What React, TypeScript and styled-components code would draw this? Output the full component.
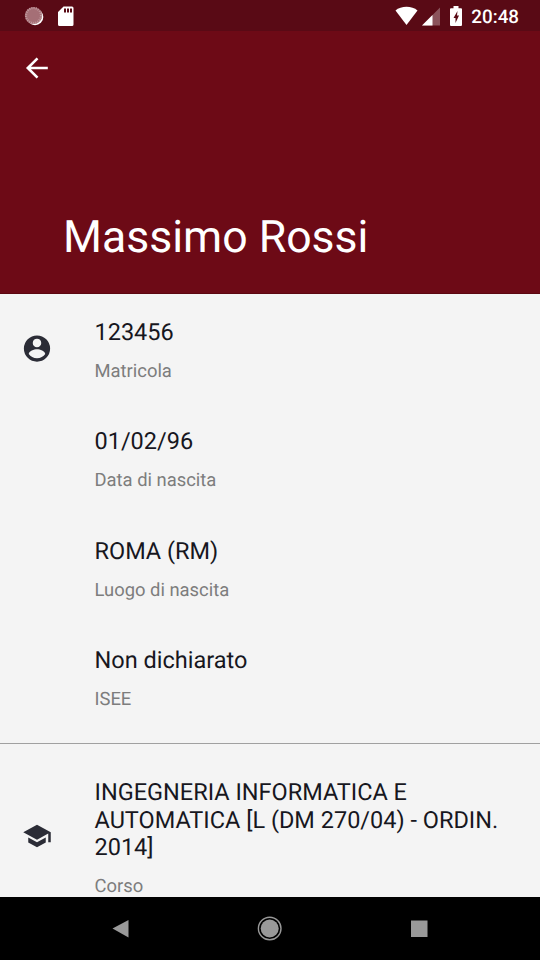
import React from "react";
import styled, { createGlobalStyle } from "styled-components";

const GlobalStyle = createGlobalStyle`
  * { box-sizing: border-box; }
  html, body { margin: 0; padding: 0; }
  body {
    font-family: Roboto, "Liberation Sans", sans-serif;
    text-rendering: geometricPrecision;
  }
  svg { display: block; }
`;

const Screen = styled.main`
  width: 540px;
  height: 960px;
  display: flex;
  flex-direction: column;
  overflow: hidden;
  background: #f4f4f4;
`;

const StatusBar = styled.div`
  flex: none;
  height: 31px;
  display: flex;
  align-items: center;
  justify-content: space-between;
  padding: 0 21px 0 24px;
  background: #590a15;
  color: #fff;
`;

const StatusGroup = styled.div<{ $gap: number }>`
  display: flex;
  align-items: center;
  gap: ${(p) => p.$gap}px;
`;

const Clock = styled.span`
  font-size: 18.800px;
  font-weight: 500;
  line-height: 22px;
  margin-top: 2px;
`;

const Header = styled.header`
  flex: none;
  height: 263px;
  display: flex;
  flex-direction: column;
  justify-content: space-between;
  padding: 19px 23px 29px;
  border-bottom: 1px solid #5c0710;
  background: #6d0a16;
  color: #fff;
`;

const BackButton = styled.button`
  width: 28px;
  height: 36px;
  padding: 0;
  border: 0;
  background: none;
  color: inherit;
  display: flex;
  align-items: center;
`;

const Title = styled.h1`
  margin: 0 0 0 40px;
  font-size: 44.600px;
  font-weight: 400;
  line-height: 54px;
  white-space: nowrap;
`;

const Content = styled.div`
  flex: 1;
  min-height: 0;
  overflow: hidden;
`;

const Section = styled.section<{ $top: number; $iconTop: number }>`
  display: grid;
  grid-template-columns: 72px 1fr;
  padding: ${(p) => p.$top}px 24px 0 22px;
  & > svg { margin-top: ${(p) => p.$iconTop}px; }
`;

const FieldList = styled.div`
  display: flex;
  flex-direction: column;
  gap: 45.800px;
  padding-left: 0.500px;
`;

const Field = styled.div`
  flex: none;
`;

const Value = styled.div`
  font-size: 23.500px;
  line-height: 27.700px;
  color: #17171e;
`;

const Label = styled.div`
  margin-top: 14px;
  font-size: 18.400px;
  line-height: 22px;
  color: #7d7d7d;
`;

const Divider = styled.hr`
  height: 1px;
  margin: 31.500px 0 0;
  border: 0;
  background: #a0a0a0;
`;

const NavBar = styled.nav`
  flex: none;
  height: 63px;
  display: grid;
  grid-template-columns: repeat(3, 149px);
  justify-content: center;
  align-items: center;
  justify-items: center;
  background: #000;
`;

const fields = [
  ["123456", "Matricola"],
  ["01/02/96", "Data di nascita"],
  ["ROMA (RM)", "Luogo di nascita"],
  ["Non dichiarato", "ISEE"],
];

export default function App() {
  return (
    <Screen>
      <GlobalStyle />
      <StatusBar>
        <StatusGroup $gap={13}>
          <svg width="20" height="20" viewBox="0 0 20 20">
            <circle cx="11" cy="11" r="8.300" fill="#fff" />
            <circle cx="9.500" cy="9.500" r="8.600" fill="#a56f76" />
            <circle cx="9.500" cy="9.500" r="7.500" fill="none" stroke="#c09a9f" strokeWidth="2.200" strokeDasharray="1 1.200" />
          </svg>
          <svg width="17" height="20" viewBox="0 0 17 20">
            <path d="M6.500 0.500h8.500a1.500 1.500 0 0 1 1.500 1.500v16.500a1.500 1.500 0 0 1-1.500 1.500H2.500a1.500 1.500 0 0 1-1.500-1.500V6zM7 2.500v4h2V2.500zm3 0v4h2V2.500zm3 0v4h2V2.500z" fill="#fff" fillRule="evenodd" />
          </svg>
        </StatusGroup>
        <StatusGroup $gap={4}>
          <svg width="23" height="20" viewBox="0 0 23 20"><path d="M0.500 4.500C6-0.500 17-0.500 22.500 4.500L11.500 19z" fill="#fff" /></svg>
          <svg width="18" height="20" viewBox="0 0 18 20"><path d="M18 1.500v18H0z" fill="#fff" opacity=".3" /><path d="M10.500 9V19.500H0z" fill="#fff" /></svg>
          <svg width="23" height="20" viewBox="0 0 23 20"><path d="M7 2.300h2.500V0h5v2.300h2.500a1 1 0 0 1 1 1V19a1 1 0 0 1-1 1h-10a1 1 0 0 1-1-1V3.300a1 1 0 0 1 1-1zM13.500 5L9.500 12h2v5l3.500-7.500H13z" fill="#fff" fillRule="evenodd" /></svg>
          <Clock>20:48</Clock>
        </StatusGroup>
      </StatusBar>
      <Header>
        <BackButton aria-label="Indietro">
          <svg width="28" height="28" viewBox="0 0 28 28"><path d="M24.800 14H5M14.500 4.300L4.800 14l9.700 9.700" fill="none" stroke="#fff" strokeWidth="2.600" /></svg>
        </BackButton>
        <Title>Massimo Rossi</Title>
      </Header>
      <Content>
        <Section $top={24.8} $iconTop={14.2}>
          <svg width="30" height="31" viewBox="0 0 24 24" fill="#2b2c36"><path d="M12 1.500a10.500 10.500 0 1 0 0 21 10.500 10.500 0 0 0 0-21zm0 2.600a3.400 3.400 0 1 1 0 6.800 3.400 3.400 0 0 1 0-6.800zm0 15.700c-2.800 0-5.200-1.300-6.600-3.400.1-2.300 4.200-3.800 6.600-3.800s6.500 1.500 6.600 3.800c-1.400 2.100-3.800 3.400-6.600 3.400z" /></svg>
          <FieldList>
            {fields.map(([value, label]) => (
              <Field key={label}><Value>{value}</Value><Label>{label}</Label></Field>
            ))}
          </FieldList>
        </Section>
        <Divider />
        <Section $top={35.5} $iconTop={42}>
          <svg width="30" height="30" viewBox="0 0 24 24" fill="#2b2c36"><path d="M5 13.180v4L12 21l7-3.820v-4L12 17l-7-3.820zM12 3L1 9l11 6 9-4.910V17h2V9L12 3z" /></svg>
          <FieldList>
            <Field>
              <Value>INGEGNERIA INFORMATICA E AUTOMATICA [L (DM 270/04) - ORDIN. 2014]</Value>
              <Label>Corso</Label>
            </Field>
          </FieldList>
        </Section>
      </Content>
      <NavBar>
        <svg width="18" height="20" viewBox="0 0 18 20"><path d="M16.500 1v17.500L0.500 9.500z" fill="#999" /></svg>
        <svg width="26" height="26" viewBox="0 0 26 26"><circle cx="12.700" cy="12.500" r="11.300" fill="none" stroke="#999" strokeWidth="1.400" /><circle cx="12.700" cy="12.500" r="9" fill="#999" /></svg>
        <svg width="18" height="18"><rect x="1" y="0.500" width="16.500" height="16.500" fill="#999" /></svg>
      </NavBar>
    </Screen>
  );
}
